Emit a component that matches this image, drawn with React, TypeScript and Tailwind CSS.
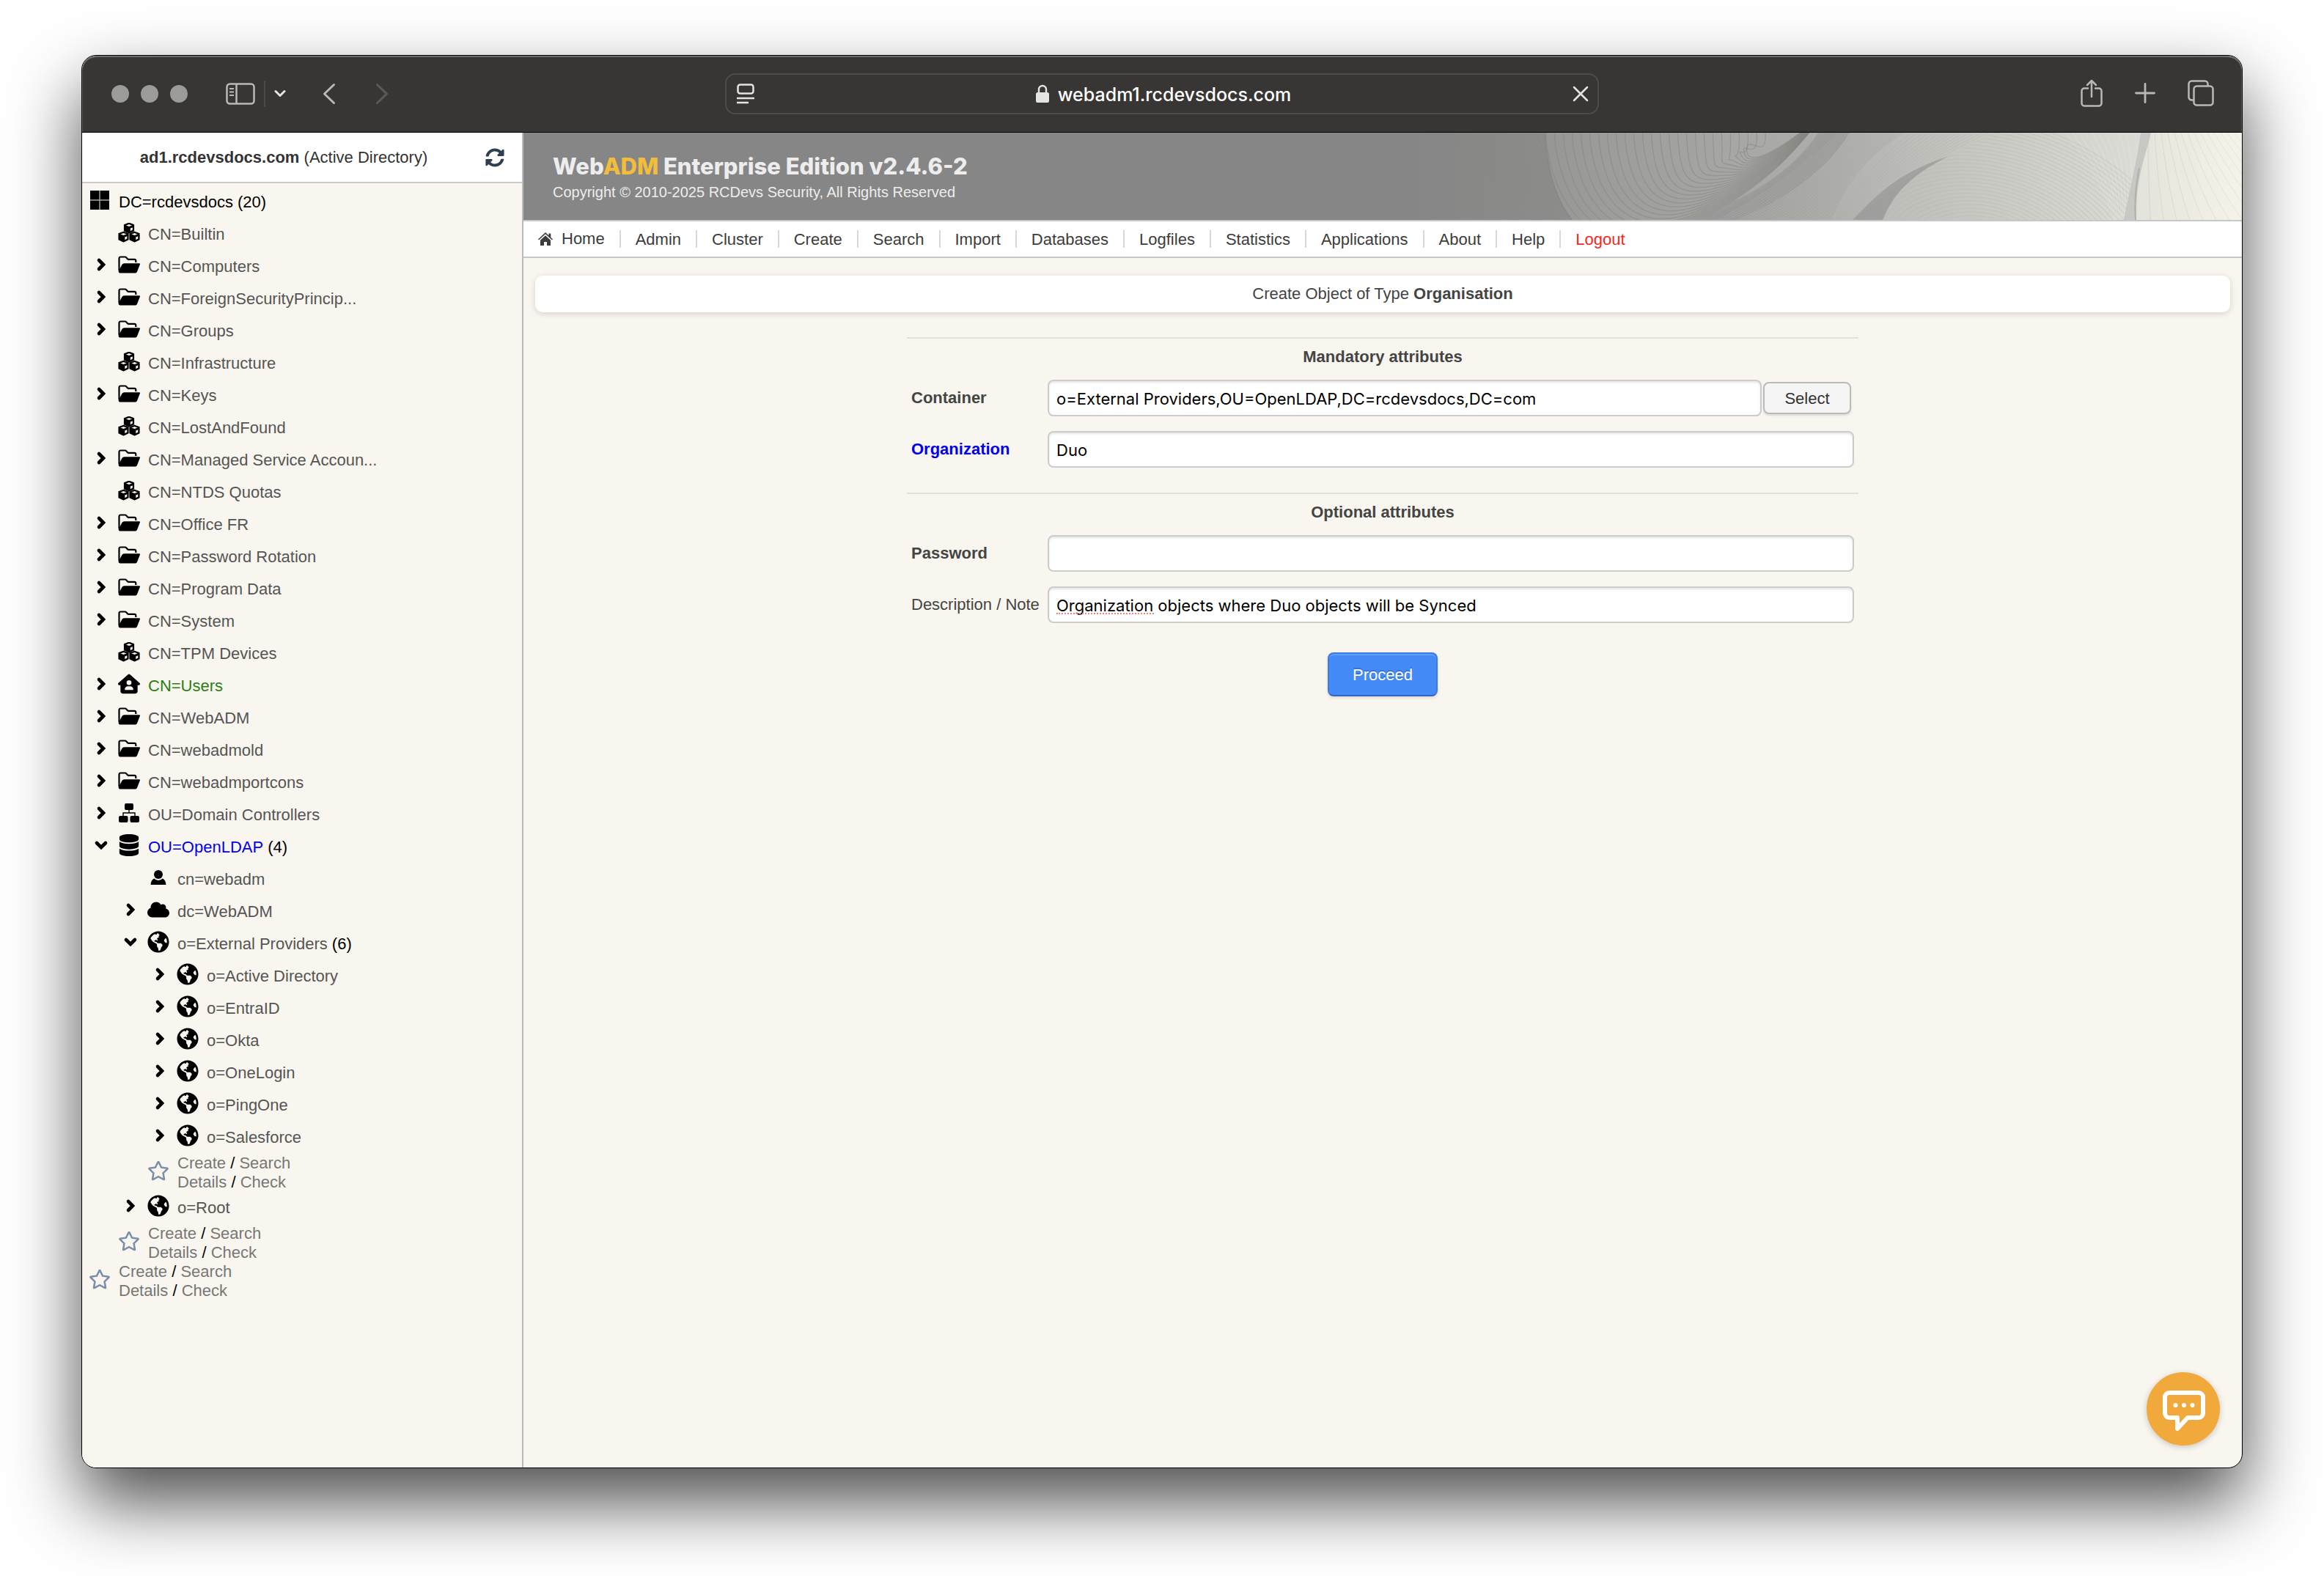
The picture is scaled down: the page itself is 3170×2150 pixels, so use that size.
import React from "react";
import { FaCloud, FaDatabase, FaGlobeAmericas, FaRegStar, FaSyncAlt } from "react-icons/fa";
import { FaHouseUser } from "react-icons/fa6";

type IconName =
  | "cubes"
  | "folder"
  | "house"
  | "sitemap"
  | "database"
  | "user"
  | "cloud"
  | "globe";

type TreeItem = {
  label: string;
  icon: IconName;
  level: 1 | 2 | 3;
  state?: "open" | "closed";
  count?: number;
  color?: string;
};

const ITEMS: TreeItem[] = [
  { label: "CN=Builtin", icon: "cubes", level: 1 },
  { label: "CN=Computers", icon: "folder", level: 1, state: "closed" },
  { label: "CN=ForeignSecurityPrincip...", icon: "folder", level: 1, state: "closed" },
  { label: "CN=Groups", icon: "folder", level: 1, state: "closed" },
  { label: "CN=Infrastructure", icon: "cubes", level: 1 },
  { label: "CN=Keys", icon: "folder", level: 1, state: "closed" },
  { label: "CN=LostAndFound", icon: "cubes", level: 1 },
  { label: "CN=Managed Service Accoun...", icon: "folder", level: 1, state: "closed" },
  { label: "CN=NTDS Quotas", icon: "cubes", level: 1 },
  { label: "CN=Office FR", icon: "folder", level: 1, state: "closed" },
  { label: "CN=Password Rotation", icon: "folder", level: 1, state: "closed" },
  { label: "CN=Program Data", icon: "folder", level: 1, state: "closed" },
  { label: "CN=System", icon: "folder", level: 1, state: "closed" },
  { label: "CN=TPM Devices", icon: "cubes", level: 1 },
  { label: "CN=Users", icon: "house", level: 1, state: "closed", color: "text-[#2a8012]" },
  { label: "CN=WebADM", icon: "folder", level: 1, state: "closed" },
  { label: "CN=webadmold", icon: "folder", level: 1, state: "closed" },
  { label: "CN=webadmportcons", icon: "folder", level: 1, state: "closed" },
  { label: "OU=Domain Controllers", icon: "sitemap", level: 1, state: "closed" },
  { label: "OU=OpenLDAP", icon: "database", level: 1, state: "open", count: 4, color: "text-[#0000ee]" },
  { label: "cn=webadm", icon: "user", level: 2 },
  { label: "dc=WebADM", icon: "cloud", level: 2, state: "closed" },
  { label: "o=External Providers", icon: "globe", level: 2, state: "open", count: 6 },
  { label: "o=Active Directory", icon: "globe", level: 3, state: "closed" },
  { label: "o=EntraID", icon: "globe", level: 3, state: "closed" },
  { label: "o=Okta", icon: "globe", level: 3, state: "closed" },
  { label: "o=OneLogin", icon: "globe", level: 3, state: "closed" },
  { label: "o=PingOne", icon: "globe", level: 3, state: "closed" },
  { label: "o=Salesforce", icon: "globe", level: 3, state: "closed" },
];

const ROOT_ITEM: TreeItem = { label: "o=Root", icon: "globe", level: 2, state: "closed" };

const NAV = [
  "Admin",
  "Cluster",
  "Create",
  "Search",
  "Import",
  "Databases",
  "Logfiles",
  "Statistics",
  "Applications",
  "About",
  "Help",
];

const INDENT = ["", "pl-1", "pl-11", "pl-21"];

const FolderIcon = () => (
  <svg viewBox="0 0 30 24" className="h-6 w-[30px]">
    <path
      d="M1.5 20V3.5a2 2 0 0 1 2-2h6.2a2 2 0 0 1 1.5.7l1.8 2a2 2 0 0 0 1.5.7h7.8a2 2 0 0 1 2 2v2"
      fill="none"
      stroke="currentColor"
      strokeWidth="2.2"
    />
    <path
      d="M8.6 10.2h20.2a1.2 1.2 0 0 1 1.1 1.6L26 21.8a2.4 2.4 0 0 1-2.2 1.6H2.6a2 2 0 0 1-1.9-2.6l4.9-9a3.3 3.3 0 0 1 3-1.6z"
      fill="currentColor"
    />
  </svg>
);

const CUBES = [
  [15, 7],
  [7.5, 19],
  [22.5, 19],
];

const CubesIcon = () => (
  <svg viewBox="0 0 30 27" className="h-[27px] w-[30px]">
    {CUBES.map(([x, y]) => (
      <g key={x} transform={`translate(${x} ${y})`}>
        <path d="M0-6.5 6.2-4.2V3.8L0 6.6-6.2 3.8V-4.2z" fill="#000" stroke="#000" strokeWidth="1.8" strokeLinejoin="round" />
        <path d="M0-5 4-3.5 0-2-4-3.5z" fill="#f9f6ef" />
        <path d="M1.8.6 4.8-.8V2.6L1.8 4.2z" fill="#f9f6ef" />
      </g>
    ))}
  </svg>
);

const SitemapIcon = () => (
  <svg viewBox="0 0 28 26" className="h-[26px] w-7" fill="currentColor">
    <rect x="8" width="12" height="9" rx="2" />
    <rect y="17" width="12.5" height="9" rx="2" />
    <rect x="15.5" y="17" width="12.5" height="9" rx="2" />
    <path d="M14 9v4M6 17v-4h16v4" fill="none" stroke="currentColor" strokeWidth="1.4" />
  </svg>
);

const UserIcon = () => (
  <svg viewBox="0 0 22 20" className="h-5 w-[22px]" fill="currentColor">
    <circle cx="11" cy="6" r="6" />
    <path d="M5.2 11.5a8 8 0 0 0 11.6 0c2.7 1.2 4.3 3.7 4.7 8.5H.5c.4-4.8 2-7.3 4.7-8.5z" />
  </svg>
);

const WindowsIcon = () => (
  <svg viewBox="0 0 26 26" className="size-[26px]" fill="#000">
    <path d="M0 0h26v26H0z" fill="#a9a8a3" />
    <path d="M0 0h12.3v12.3H0zM13.7 0H26v12.3H13.7zM0 13.7h12.3V26H0zM13.7 13.7H26V26H13.7z" />
  </svg>
);

const ICONS: Record<IconName, React.ReactNode> = {
  cubes: <CubesIcon />,
  folder: <FolderIcon />,
  house: <FaHouseUser className="size-[30px]" />,
  sitemap: <SitemapIcon />,
  database: <FaDatabase className="size-[30px]" />,
  user: <UserIcon />,
  cloud: <FaCloud className="size-[30px]" />,
  globe: <FaGlobeAmericas className="size-[30px]" />,
};

const Chevron = ({ open }: { open: boolean }) => (
  <svg viewBox="0 0 24 24" className="size-6" fill="none" stroke="#000" strokeWidth="4.6" strokeLinecap="round">
    <path d={open ? "M6 9l6 6 6-6" : "M9 6l6 6-6 6"} />
  </svg>
);

const TreeRow = ({ item }: { item: TreeItem }) => (
  <li className={`flex h-11 items-center pb-0.5 ${INDENT[item.level]}`}>
    <span className="flex w-10 justify-center pb-1 pl-1">
      {item.state && (
        <button type="button" aria-label={`Toggle ${item.label}`}>
          <Chevron open={item.state === "open"} />
        </button>
      )}
    </span>
    <span className="flex w-10 justify-center pb-1">{ICONS[item.icon]}</span>
    <a href="#" className={`pl-1.5 ${item.color ?? "text-[#555]"}`}>
      {item.label}
    </a>
    {item.count && <span className="pl-1.5">({item.count})</span>}
  </li>
);

const ActionRow = ({ indent }: { indent: string }) => (
  <li className={`flex h-[52px] items-center leading-[26px] ${indent}`}>
    <span className="flex w-10 justify-center pb-1.5">
      <FaRegStar className="size-[30px] text-[#7b8fa8]" />
    </span>
    <span className="pl-1.5 text-[#777]">
      <a href="#">Create</a> <span className="text-black">/</span> <a href="#">Search</a>
      <br />
      <a href="#">Details</a> <span className="text-black">/</span> <a href="#">Check</a>
    </span>
  </li>
);

const Sidebar = () => (
  <aside className="w-[602px] shrink-0 border-r-2 border-[#b9bcbe] bg-[#f9f6ef]">
    <div className="flex h-[69px] items-center border-b-2 border-[#c9c9c9] bg-white pr-6">
      <div className="flex-1 text-center text-[#333]">
        <b>ad1.rcdevsdocs.com</b> (Active Directory)
      </div>
      <button type="button" aria-label="Refresh" className="text-[#2f3e50]">
        <FaSyncAlt className="size-[26px]" />
      </button>
    </div>
    <ul className="pt-1">
      <li className="flex h-11 items-center pb-0.5 pl-1">
        <span className="flex w-10 justify-center pb-1">
          <WindowsIcon />
        </span>
        <a href="#" className="pl-1.5">
          DC=rcdevsdocs (20)
        </a>
      </li>
      {ITEMS.map((item) => (
        <TreeRow key={item.label} item={item} />
      ))}
      <ActionRow indent="pl-21" />
      <TreeRow item={ROOT_ITEM} />
      <ActionRow indent="pl-11" />
      <ActionRow indent="pl-1" />
    </ul>
  </aside>
);

const range = (n: number) => Array.from({ length: n }, (_, i) => i);

// Woven line artwork on the right side of the banner
const Waves = () => (
  <svg viewBox="0 0 1100 119" className="h-[119px] w-[1100px] shrink-0" fill="none">
    <defs>
      <linearGradient id="petal" x1="0" y1="0" x2="1" y2="0">
        <stop offset="0" stopColor="#979795" />
        <stop offset="1" stopColor="#b0b0ad" />
      </linearGradient>
      <linearGradient id="band" x1="0" y1="0" x2="1" y2="0">
        <stop offset="0" stopColor="#999997" />
        <stop offset="1" stopColor="#b6b6b2" />
      </linearGradient>
      <linearGradient id="dome" gradientUnits="userSpaceOnUse" x1="610" y1="0" x2="960" y2="0">
        <stop offset="0" stopColor="#bcbcb8" />
        <stop offset="1" stopColor="#dcdcd6" />
      </linearGradient>
      <linearGradient id="fold" gradientUnits="userSpaceOnUse" x1="540" y1="0" x2="760" y2="0">
        <stop offset="0" stopColor="#b0b0ad" />
        <stop offset="1" stopColor="#cacac5" />
      </linearGradient>
      <linearGradient id="edge" x1="0" y1="0" x2="1" y2="0">
        <stop offset="0" stopColor="#e3e2db" />
        <stop offset="0.7" stopColor="#f1efe3" />
        <stop offset="1" stopColor="#f5f3e7" />
      </linearGradient>
      <clipPath id="petalClip">
        <path d="M149 0C152 45 162 90 186 119H480L570 0z" />
      </clipPath>
      <clipPath id="domeClip">
        <path d="M610 119C622 90 640 62 700 32L760 0H962L939 119z" />
      </clipPath>
    </defs>
    {range(22).map((i) => (
      <path
        key={i}
        d={`M${-10 + i * 7} 0C${50 + i * 5} 30 ${90 + i * 3} 80 ${110 + i * 4} 119`}
        stroke="#7b7b78"
        strokeOpacity={i * 0.006}
      />
    ))}
    <path d="M149 0C152 45 162 90 186 119H480L570 0z" fill="url(#petal)" />
    <g clipPath="url(#petalClip)">
      {range(26).map((i) => (
        <path
          key={i}
          d={`M${150 + i * 12} -4C${154 + i * 12} ${96 - i * 2} ${222 + i * 8} ${196 - i * 8} ${350 + i * 3} ${126 - i * 4}S${490 + i} ${20 - i} 560 -60`}
          stroke="#858582"
          strokeOpacity="0.5"
          strokeWidth="1.4"
        />
      ))}
    </g>
    <path d="M149 0C152 45 162 90 186 119" stroke="#888886" strokeWidth="2" />
    <path d="M360 119C440 90 495 45 530 0H660C630 40 590 75 545 119z" fill="url(#band)" />
    <path d="M330 119C420 100 490 50 522 0H565C535 50 480 90 410 119z" fill="#979795" fillOpacity="0.7" />
    {range(26).map((i) => (
      <path
        key={i}
        d={`M${385 + i * 6} 119C${445 + i * 5} 90 ${510 + i * 4} 40 ${550 + i * 4} 0`}
        stroke="#bebebb"
        strokeOpacity="0.35"
      />
    ))}
    <path d="M540 119C560 70 590 30 640 0H780L700 32C650 55 620 80 569 119z" fill="url(#fold)" />
    {range(14).map((i) => (
      <path
        key={i}
        d={`M${545 + i * 3} 119C${575 + i * 4} 70 ${610 + i * 6} 30 ${650 + i * 8} 0`}
        stroke="#a3a3a0"
        strokeOpacity="0.25"
      />
    ))}
    <path d="M610 119C622 90 640 62 700 32L760 0H962L939 119z" fill="url(#dome)" />
    <g clipPath="url(#domeClip)">
      {range(34).map((i) => (
        <ellipse
          key={i}
          cx="745"
          cy="190"
          rx={290 - i * 7}
          ry={210 - i * 5}
          transform="rotate(14 745 190)"
          stroke="#b5b6af"
          strokeOpacity="0.35"
          strokeWidth="1.4"
        />
      ))}
      {range(10).map((i) => (
        <path
          key={i}
          d={`M${860 + i * 9} 0C${890 + i * 7} 40 ${915 + i * 4} 80 ${925 + i * 2} 119`}
          stroke="#eeeee9"
          strokeOpacity="0.35"
        />
      ))}
    </g>
    <path d="M569 119C610 75 640 52 700 32C640 62 622 90 610 119z" fill="#9a9a98" fillOpacity="0.75" />
    <path d="M974 0C966 40 955 60 955 119H1100V0z" fill="url(#edge)" />
    {range(18).map((i) => (
      <path
        key={i}
        d={`M${972 + i * 9} 0C${972 + i * 12} 50 ${974 + i * 15} 90 ${975 + i * 18} 119`}
        stroke="#c9c9c0"
        strokeOpacity={0.5 - i * 0.02}
      />
    ))}
    <path d="M962 0H976C968 35 955 60 956 119H939C946 80 956 45 962 0z" fill="#c7c7c3" />
    <path d="M960 48C956 70 953 90 955 119" stroke="#b0b0ac" strokeWidth="2" />
  </svg>
);

const Banner = () => (
  <header className="flex h-[121px] overflow-hidden border-b-2 border-[#c6c7c9] bg-[linear-gradient(to_right,#868686_52%,#8c8c8a_60%,#a3a3a0_68%,#aeaeab_79%,#c8c8c2_85%,#dadad4_93%,#f4f2e6_100%)] text-[#ededed]">
    <div className="flex-1 pt-[26px] pl-10 whitespace-nowrap">
      <h1 className="font-[Inter] text-[31px] leading-10 font-extrabold">
        Web<span className="text-[#f3bd3c]">ADM</span> Enterprise Edition v2.4.6-2
      </h1>
      <p className="text-[20px] leading-[30px]">Copyright © 2010-2025 RCDevs Security, All Rights Reserved</p>
    </div>
    <Waves />
  </header>
);

const Nav = () => (
  <nav className="flex h-[50px] items-center border-b-2 border-[#c6c7c9] bg-white leading-[26px] text-[#3c3c3c]">
    <a href="#" className="flex h-6 items-center gap-3 px-5">
      <svg viewBox="0 0 20 18" className="h-[18px] w-5" fill="currentColor">
        <path d="M10 0 14.5 4.2V1.5h2.8v5.3L20 9.4l-1 1.2-9-8.4-9 8.4L0 9.4z" />
        <path d="M10 4.2l7 6.5V18h-5v-5H8v5H3v-7.3z" />
      </svg>
      Home
    </a>
    {NAV.map((name) => (
      <a key={name} href="#" className="h-6 border-l-2 border-[#d8d8d8] px-5">
        {name}
      </a>
    ))}
    <a href="#" className="h-6 border-l-2 border-[#d8d8d8] px-5 text-[#ec2b23]">
      Logout
    </a>
  </nav>
);

const INPUT =
  "h-[50px] w-full rounded-lg border-2 border-[#ccc] bg-white px-2.5 pt-0.5 font-[Inter] text-[22px] text-black shadow-[inset_0_2px_3px_rgba(0,0,0,0.1)] outline-none";

const Field = ({
  id,
  label,
  labelClass,
  children,
}: {
  id: string;
  label: string;
  labelClass: string;
  children: React.ReactNode;
}) => (
  <div className="flex items-center px-1.5">
    <label htmlFor={id} className={`w-[186px] shrink-0 pb-0.5 whitespace-nowrap ${labelClass}`}>
      {label}
    </label>
    <div className="relative flex flex-1 items-center gap-0.5">{children}</div>
  </div>
);

const SectionTitle = ({ children }: { children: React.ReactNode }) => (
  <h2 className="mb-1.5 h-[52px] border-t-2 border-[#e2e1dc] text-center leading-[50px] font-bold">{children}</h2>
);

const CreateForm = () => (
  <form className="mx-auto mt-[34px] w-[1298px] max-w-full text-[#444]">
    <SectionTitle>Mandatory attributes</SectionTitle>
    <div className="flex flex-col gap-5">
      <Field id="container" label="Container" labelClass="font-bold">
        <input id="container" className={INPUT} defaultValue="o=External Providers,OU=OpenLDAP,DC=rcdevsdocs,DC=com" />
        <button
          type="button"
          className="mr-1 h-11 w-[120px] shrink-0 rounded-lg border-2 border-[#bbb] bg-[#f5f5f5] text-[#333] shadow-[0_2px_3px_rgba(0,0,0,0.1)]"
        >
          Select
        </button>
      </Field>
      <Field id="organization" label="Organization" labelClass="font-bold text-[#0000ee]">
        <input id="organization" className={INPUT} defaultValue="Duo" />
      </Field>
    </div>
    <div className="mt-[34px]">
      <SectionTitle>Optional attributes</SectionTitle>
    </div>
    <div className="flex flex-col gap-5">
      <Field id="password" label="Password" labelClass="font-bold">
        <input id="password" type="password" className={INPUT} />
      </Field>
      <Field id="description" label="Description / Note" labelClass="">
        <input id="description" className={INPUT} defaultValue="Organization objects where Duo objects will be Synced" />
        <span className="absolute bottom-3 left-3 w-[133px] border-b-2 border-dotted border-[#e8877f]" />
      </Field>
    </div>
    <div className="mt-10 flex justify-center">
      <button
        type="submit"
        className="h-[60px] w-[150px] rounded-lg border-2 border-[#3a7ce6] border-b-[#2f66bf] bg-[#448bf7] text-white shadow-[inset_0_2px_0_#5f9ef9,0_2px_4px_rgba(0,0,0,0.12)] [text-shadow:0_-2px_0_rgba(0,0,0,0.2)]"
      >
        Proceed
      </button>
    </div>
  </form>
);

const TitleBar = () => (
  <div className="grid h-[105px] grid-cols-[1fr_1192px_1fr] items-center rounded-t-[20px] border-b border-black bg-[#383634] text-[#b8b8b5] shadow-[inset_0_2px_0_#6d6d68,inset_1px_0_0_#5c5c59,inset_-1px_0_0_#5c5c59]">
    <div className="flex items-center pl-10">
      <div className="flex gap-4">
        <span className="size-6 rounded-full bg-[#9b9b98]" />
        <span className="size-6 rounded-full bg-[#9b9b98]" />
        <span className="size-6 rounded-full bg-[#9b9b98]" />
      </div>
      <button type="button" aria-label="Sidebar" className="ml-[52px]">
        <svg viewBox="0 0 40 30" className="h-[30px] w-10" fill="none" stroke="currentColor" strokeWidth="2.5">
          <rect x="1.5" y="1.5" width="37" height="27" rx="4" />
          <path d="M14.5 1.5v27" />
          <path d="M5 8h6M5 12.5h6M5 17h6" strokeWidth="1.8" />
        </svg>
      </button>
      <span className="ml-3 h-9 w-0.5 bg-[#4b4a48]" />
      <button type="button" aria-label="Tab groups" className="ml-3 text-[#e4e4e2]">
        <svg viewBox="0 0 16 12" className="h-3 w-4" fill="none" stroke="currentColor" strokeWidth="3" strokeLinecap="round" strokeLinejoin="round">
          <path d="M2 2.5l6 6 6-6" />
        </svg>
      </button>
      <button type="button" aria-label="Back" className="ml-[50px]">
        <svg viewBox="0 0 18 30" className="h-[30px] w-[18px]" fill="none" stroke="currentColor" strokeWidth="3" strokeLinecap="round" strokeLinejoin="round">
          <path d="M15.5 2.5L2.5 15l13 12.5" />
        </svg>
      </button>
      <button type="button" aria-label="Forward" className="ml-[54px] text-[#5b5a57]">
        <svg viewBox="0 0 18 30" className="h-[30px] w-[18px]" fill="none" stroke="currentColor" strokeWidth="3" strokeLinecap="round" strokeLinejoin="round">
          <path d="M2.5 2.5l13 12.5-13 12.5" />
        </svg>
      </button>
    </div>
    <div className="flex h-14 items-center rounded-[14px] border-2 border-[#4d4c4a] pr-3 pl-3.5 text-[#e4e4e2]">
      <svg viewBox="0 0 24 28" className="h-7 w-6" fill="none" stroke="currentColor" strokeWidth="2.5">
        <rect x="1.5" y="1.5" width="21" height="12" rx="3" />
        <path d="M0 20h24M0 26h16" />
      </svg>
      <div className="flex flex-1 items-center justify-center gap-3">
        <svg viewBox="0 0 18 26" className="h-[26px] w-[18px]">
          <path d="M4 12V7a5 5 0 0 1 10 0v5" fill="none" stroke="currentColor" strokeWidth="2.4" />
          <rect y="11" width="18" height="14" rx="2.5" fill="currentColor" />
        </svg>
        <input
          aria-label="Address"
          defaultValue="webadm1.rcdevsdocs.com"
          className="field-sizing-content bg-transparent pt-0.5 font-[Inter] text-[25px] leading-8 font-medium text-white outline-none"
        />
      </div>
      <button type="button" aria-label="Stop loading">
        <svg viewBox="0 0 22 22" className="size-[22px]" stroke="currentColor" strokeWidth="2.5" strokeLinecap="round">
          <path d="M2 2l18 18M20 2L2 20" />
        </svg>
      </button>
    </div>
    <div className="flex items-center justify-end gap-11 pr-[38px]">
      <button type="button" aria-label="Share" className="pb-0.5">
        <svg viewBox="0 0 30 38" className="h-[38px] w-[30px]" fill="none" stroke="currentColor" strokeWidth="2.5" strokeLinecap="round" strokeLinejoin="round">
          <path d="M10 12.5H5A3.5 3.5 0 0 0 1.5 16v17A3.5 3.5 0 0 0 5 36.5h20a3.5 3.5 0 0 0 3.5-3.5V16a3.5 3.5 0 0 0-3.5-3.5h-5" />
          <path d="M15 24V2M9 8l6-6 6 6" />
        </svg>
      </button>
      <button type="button" aria-label="New tab" className="pb-0.5">
        <svg viewBox="0 0 28 28" className="size-7" stroke="currentColor" strokeWidth="2.8" strokeLinecap="round">
          <path d="M14 1.5v25M1.5 14h25" />
        </svg>
      </button>
      <button type="button" aria-label="Tab overview" className="pb-0.5">
        <svg viewBox="0 0 36 36" className="size-9" fill="none" stroke="currentColor" strokeWidth="2.5">
          <path d="M8.5 27.5h-3a4 4 0 0 1-4-4v-18a4 4 0 0 1 4-4h18a4 4 0 0 1 4 4v3" />
          <rect x="8.5" y="8.5" width="26" height="26" rx="4" />
        </svg>
      </button>
    </div>
  </div>
);

export default function App() {
  return (
    <div className="flex min-h-screen bg-white px-[111px] pt-[75px] pb-[147px] font-['Liberation_Sans',Arial,sans-serif] text-[22px] text-black">
      <div className="relative flex flex-1 flex-col overflow-hidden rounded-[20px] border border-black bg-[#f9f6ef] shadow-[0_46px_96px_rgba(0,0,0,0.7)]">
        <TitleBar />
        <div className="flex flex-1">
          <Sidebar />
          <main className="min-w-0 flex-1">
            <Banner />
            <Nav />
            <div className="mx-4 mt-6 h-[50px] rounded-[10px] bg-white text-center leading-[50px] text-[#444] shadow-[0_2px_8px_rgba(0,0,0,0.15)]">
              Create Object of Type <b>Organisation</b>
            </div>
            <CreateForm />
          </main>
        </div>
        <button
          type="button"
          aria-label="Open chat"
          className="absolute right-[30px] bottom-[30px] size-[100px] rounded-full bg-[#f1a93b] shadow-[0_2px_8px_rgba(0,0,0,0.2)]"
        >
          <svg viewBox="0 0 100 100" className="size-full" fill="none" stroke="#fff" strokeWidth="6" strokeLinejoin="round">
            <path d="M31 28h40a6 6 0 0 1 6 6v22a6 6 0 0 1-6 6H56L42 77V62H31a6 6 0 0 1-6-6V34a6 6 0 0 1 6-6z" />
            <g fill="#fff" stroke="none">
              <circle cx="39.5" cy="45" r="3" />
              <circle cx="51" cy="45" r="3" />
              <circle cx="62.5" cy="45" r="3" />
            </g>
          </svg>
        </button>
      </div>
    </div>
  );
}
